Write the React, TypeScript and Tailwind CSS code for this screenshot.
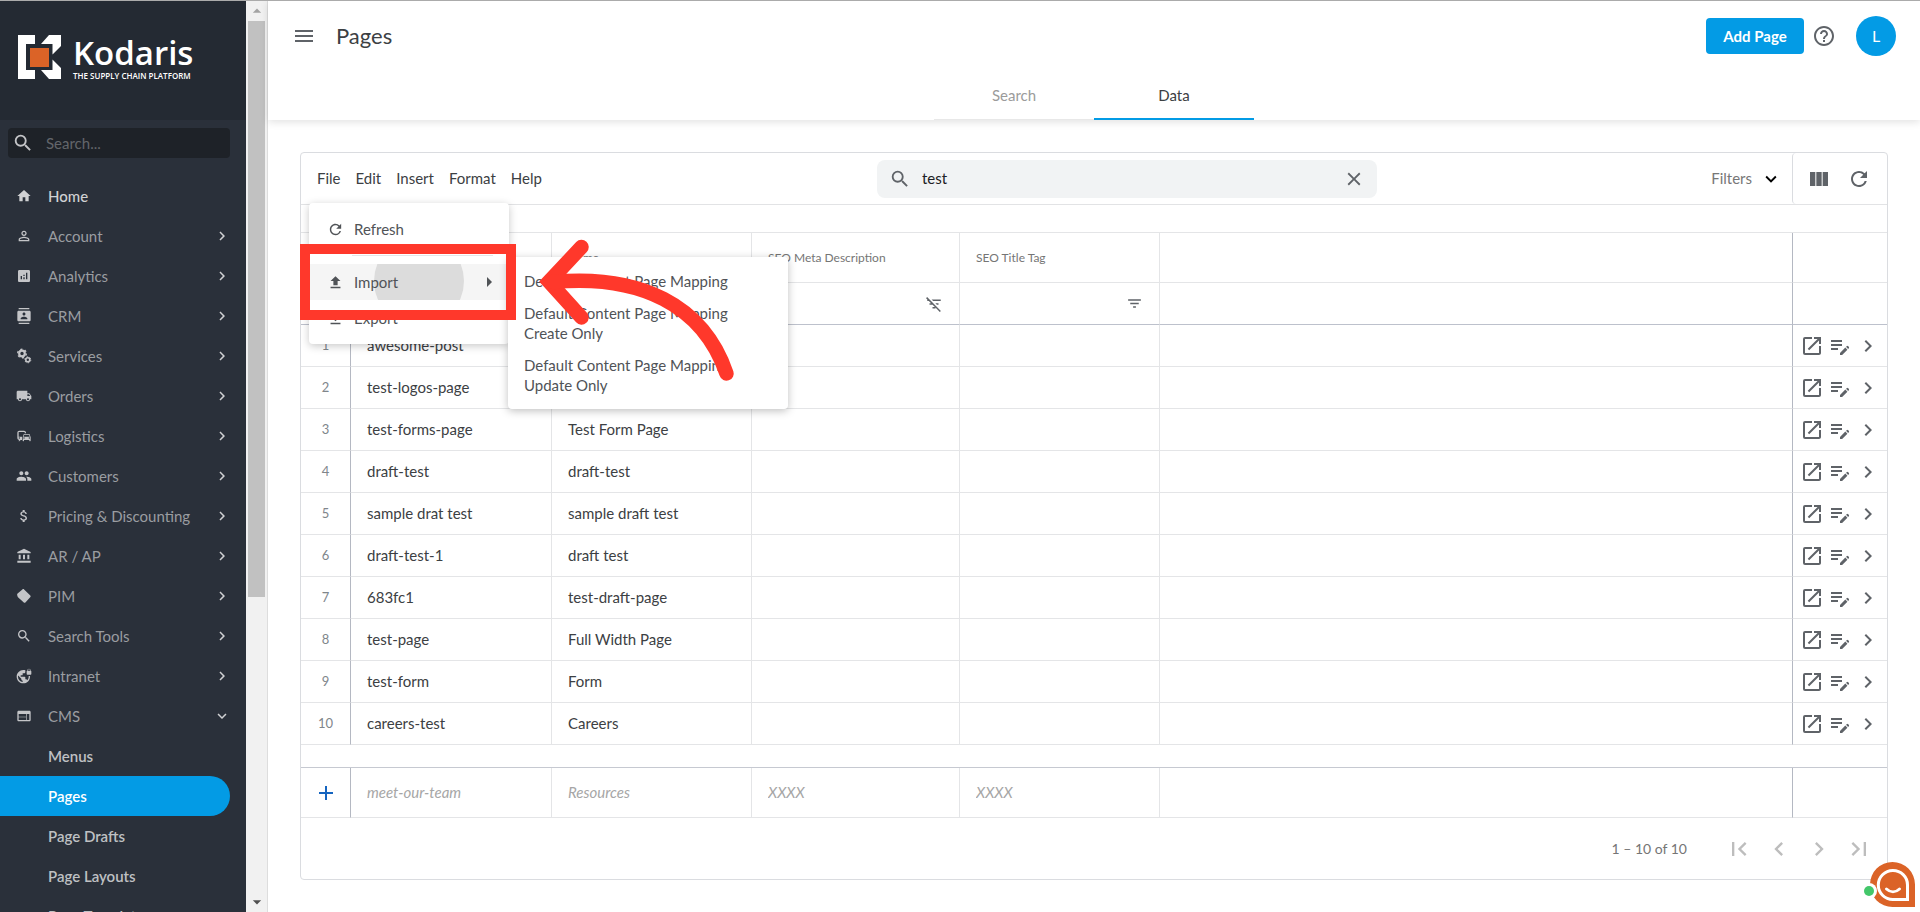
import React from "react";
import {
  MdAccountBalance,
  MdAdd,
  MdAnalytics,
  MdArrowDropUp,
  MdArrowDropDown,
  MdArrowRight,
  MdAttachMoney,
  MdChevronLeft,
  MdChevronRight,
  MdClose,
  MdContacts,
  MdDownload,
  MdEditNote,
  MdExpandMore,
  MdFilterList,
  MdFilterListOff,
  MdFirstPage,
  MdGroup,
  MdHelpOutline,
  MdHome,
  MdLastPage,
  MdLocalShipping,
  MdMenu,
  MdOpenInNew,
  MdOutlineCommute,
  MdPersonOutline,
  MdRefresh,
  MdSearch,
  MdUpload,
  MdViewColumn,
  MdVpnLock,
  MdWeb,
} from "react-icons/md";

const TagIcon = () => (
  <svg viewBox="0 0 16 16" className="size-4" fill="currentColor">
    <path d="M1.6 5.4 6.4 1.4c.5-.4 1.200-.4 1.700 0l6.200 6c.5.5.5 1.100.1 1.600l-5 5.400c-.5.5-1.200.5-1.600 0L2 9.200c-.3-.3-.5-.7-.6-1.100l-.3-1.700c0-.4.2-.7.5-1z" />
  </svg>
);

const GearsIcon = () => (
  <svg viewBox="0 0 16 16" className="size-4" fill="none" stroke="currentColor">
    <circle cx="6" cy="5.500" r="2.800" strokeWidth="2.200" />
    <circle cx="6" cy="5.500" r="4.300" strokeWidth="1.400" strokeDasharray="2.100 2.400" />
    <circle cx="11.800" cy="11.800" r="2" strokeWidth="1.600" />
    <circle cx="11.800" cy="11.800" r="3" strokeWidth="1" strokeDasharray="1.600 1.540" />
  </svg>
);

const navItems = [
  { label: "Account", icon: <MdPersonOutline size={16} /> },
  { label: "Analytics", icon: <MdAnalytics size={16} /> },
  { label: "CRM", icon: <MdContacts size={16} /> },
  { label: "Services", icon: <GearsIcon /> },
  { label: "Orders", icon: <MdLocalShipping size={16} /> },
  { label: "Logistics", icon: <MdOutlineCommute size={16} /> },
  { label: "Customers", icon: <MdGroup size={16} /> },
  { label: "Pricing & Discounting", icon: <MdAttachMoney size={16} /> },
  { label: "AR / AP", icon: <MdAccountBalance size={16} /> },
  { label: "PIM", icon: <TagIcon /> },
  { label: "Search Tools", icon: <MdSearch size={16} /> },
  { label: "Intranet", icon: <MdVpnLock size={16} /> },
];

const cmsItems = ["Menus", "Pages", "Page Drafts", "Page Layouts", "Page Templates"];

const rows = [
  ["awesome-post", ""],
  ["test-logos-page", ""],
  ["test-forms-page", "Test Form Page"],
  ["draft-test", "draft-test"],
  ["sample drat test", "sample draft test"],
  ["draft-test-1", "draft test"],
  ["683fc1", "test-draft-page"],
  ["test-page", "Full Width Page"],
  ["test-form", "Form"],
  ["careers-test", "Careers"],
];

function Logo() {
  return (
    <div className="flex h-[119px] items-start gap-3 bg-[#242a33] pt-[33px] pl-[18px] text-white">
      <svg viewBox="0 0 43 44" className="mt-px h-11 w-[43px] shrink-0">
        <path fill="#fff" d="M0 0h17v9H8v26h9v9H0z" />
        <path fill="#fff" d="M31 0h12v11l-8.500 8.500V9H23z" />
        <path fill="#fff" d="M34.500 24.500 43 33v11H31l-8-9h11.500z" />
        <path fill="#db6327" d="M12 13h19v19H12z" />
      </svg>
      <div className="font-['Open_Sans',sans-serif] font-semibold">
        <div className="text-[33px] leading-[38px]">Kodaris</div>
        <div className="text-[8px] leading-[8px] whitespace-nowrap">THE SUPPLY CHAIN PLATFORM</div>
      </div>
    </div>
  );
}

function Sidebar() {
  return (
    <aside className="w-[246px] shrink-0 overflow-hidden bg-[#2a303a]">
      <Logo />
      <div className="pt-2 pr-4 pl-2">
        <label className="flex h-[30px] items-center gap-3 rounded bg-[#1e2228] pl-1 text-[#c4c5c8]">
          <MdSearch size={22} className="shrink-0" />
          <input
            aria-label="Search menu"
            placeholder="Search..."
            className="w-full bg-transparent text-[15px] outline-none placeholder:text-[#63666b]"
          />
        </label>
      </div>
      <nav className="mt-[18px] text-[15px]">
        <a href="#home" className="flex h-10 items-center gap-4 pl-4 font-medium text-[#d0d1d3]">
          <MdHome size={16} />
          Home
        </a>
        {navItems.map((item) => (
          <a key={item.label} href="#section" className="flex h-10 items-center pr-[15px] pl-4 text-[#9a9da1]">
            <span className="flex w-4 justify-center text-[#c4c5c8]">{item.icon}</span>
            <span className="ml-4 flex-1">{item.label}</span>
            <MdChevronRight size={18} className="text-[#d0d1d3]" />
          </a>
        ))}
        <a href="#cms" className="flex h-10 items-center pr-[15px] pl-4 text-[#9a9da1]">
          <MdWeb size={16} className="text-[#c4c5c8]" />
          <span className="ml-4 flex-1">CMS</span>
          <MdExpandMore size={18} className="text-[#d0d1d3]" />
        </a>
        {cmsItems.map((label) => (
          <a
            key={label}
            href="#cms-page"
            className={
              label === "Pages"
                ? "mr-4 flex h-10 items-center rounded-r-full bg-[#039be5] pl-12 font-semibold text-white"
                : "mr-4 flex h-10 items-center pl-12 font-semibold text-[#bfc0c3]"
            }
          >
            {label}
          </a>
        ))}
      </nav>
    </aside>
  );
}

function Scrollbar() {
  return (
    <div className="flex w-[22px] shrink-0 flex-col items-center border-r border-[#dddddd] bg-[#f1f1f1] text-[#505050]">
      <MdArrowDropUp size={20} className="shrink-0 text-[#a3a3a3]" />
      <div className="h-[576px] w-[17px] shrink-0 bg-[#c1c1c1]" />
      <MdArrowDropDown size={20} className="mt-auto shrink-0" />
    </div>
  );
}

function Header() {
  return (
    <header className="relative flex h-[119px] flex-col justify-between bg-white shadow-[0_2px_8px_rgba(0,0,0,0.12)]">
      <div className="flex items-center pt-[15px] pr-6 pl-6">
        <button aria-label="Toggle menu" className="text-[#5f6368]">
          <MdMenu size={24} />
        </button>
        <h1 className="ml-5 flex-1 text-[22px] leading-7 text-[#3c4043]">Pages</h1>
        <button className="h-9 w-[98px] rounded bg-[#039be5] text-[15px] font-bold text-white">Add Page</button>
        <button aria-label="Help" className="ml-2 text-[#5f6368]">
          <MdHelpOutline size={24} />
        </button>
        <button className="ml-5 size-10 rounded-full bg-[#039be5] text-base text-white">L</button>
      </div>
      <div className="flex justify-center text-[15px]">
        <button className="h-12 w-40 border-b border-[#e8e8e8] text-[#9b9b9b]">Search</button>
        <button className="h-12 w-40 border-b-2 border-[#039be5] text-[#3c4043]">Data</button>
      </div>
    </header>
  );
}

function Toolbar() {
  return (
    <div className="flex h-[52px] items-stretch border-b border-[#e2e3e5] text-[15px]">
      <div className="flex flex-1 items-center gap-[15px] pl-4 text-[#3c4043]">
        <button>File</button>
        <button>Edit</button>
        <button>Insert</button>
        <button>Format</button>
        <button>Help</button>
      </div>
      <div className="flex h-[38px] w-[500px] items-center self-center rounded-lg bg-[#f1f3f4] px-3 text-[#5f6368]">
        <MdSearch size={22} className="shrink-0" />
        <input
          aria-label="Search pages"
          defaultValue="test"
          className="min-w-0 flex-1 bg-transparent pl-[11px] text-[#202124] outline-none"
        />
        <button aria-label="Clear search">
          <MdClose size={22} />
        </button>
      </div>
      <div className="flex w-[510px] items-stretch justify-end">
        <button className="flex items-center gap-2 pr-2.5 text-[#777777]">
          Filters
          <MdExpandMore size={22} className="text-black" />
        </button>
        <div className="flex w-[95px] items-center gap-4 rounded-l border-l border-[#dadce0] pl-3.5 text-[#5f6368]">
          <button aria-label="Columns">
            <MdViewColumn size={24} />
          </button>
          <button aria-label="Reload">
            <MdRefresh size={24} />
          </button>
        </div>
      </div>
    </div>
  );
}

const cell = "border-r border-b border-[#e4e5e7] px-4";
const headCell = "border-r border-b border-[#e4e5e7] px-4 text-left font-normal";
const filterCell = "border-r border-b border-r-[#e4e5e7] border-b-[#bdc1cc] px-4";
const wideCell = "border-b border-[#e4e5e7]";
const numCell = "border-r border-b border-r-[#b4b8c2] border-b-[#e4e5e7]";
const pinCell = "border-b border-l border-b-[#e4e5e7] border-l-[#b4b8c2]";

function DataTable() {
  return (
    <table className="w-full table-fixed border-separate border-spacing-0 text-[15px] text-[#3c4043]">
      <colgroup>
        <col className="w-[50px]" />
        <col className="w-[201px]" />
        <col className="w-[200px]" />
        <col className="w-[208px]" />
        <col className="w-[200px]" />
        <col />
        <col className="w-[95px]" />
      </colgroup>
      <thead className="text-xs text-[#757575]">
        <tr>
          <td colSpan={7} className="h-7 border-b border-[#e4e5e7]" />
        </tr>
        <tr className="h-[50px]">
          <th className={numCell} />
          <th className={headCell} />
          <th className={headCell}>Name</th>
          <th className={headCell}>SEO Meta Description</th>
          <th className={headCell}>SEO Title Tag</th>
          <th className={wideCell} />
          <th className={pinCell} />
        </tr>
        <tr className="h-[42px] text-[#5f6368]">
          <td className="border-r border-b border-r-[#b4b8c2] border-b-[#bdc1cc]" />
          <td className={filterCell} />
          <td className={filterCell} />
          <td className={filterCell}>
            <button aria-label="Clear filter" className="float-right">
              <MdFilterListOff size={18} />
            </button>
          </td>
          <td className={filterCell}>
            <button aria-label="Filter" className="float-right">
              <MdFilterList size={17} />
            </button>
          </td>
          <td className="border-b border-[#bdc1cc]" />
          <td className="border-b border-l border-b-[#bdc1cc] border-l-[#b4b8c2]" />
        </tr>
      </thead>
      <tbody>
        {rows.map(([code, name], i) => (
          <tr key={code} className="h-[42px]">
            <td className={numCell + " text-center text-[13px] text-[#80868b]"}>{i + 1}</td>
            <td className={cell}>{code}</td>
            <td className={cell}>{name}</td>
            <td className={cell} />
            <td className={cell} />
            <td className={wideCell} />
            <td className={pinCell}>
              <div className="flex gap-1 pl-[7px] text-[#5f6368]">
                <button aria-label="Open page">
                  <MdOpenInNew size={24} />
                </button>
                <button aria-label="Edit page">
                  <MdEditNote size={24} />
                </button>
                <button aria-label="View details">
                  <MdChevronRight size={24} />
                </button>
              </div>
            </td>
          </tr>
        ))}
        <tr>
          <td colSpan={7} className="h-[23px] border-b border-[#c6c9d1]" />
        </tr>
        <tr className="h-[50px]">
          <td className={numCell}>
            <button aria-label="Add row" className="mx-auto block text-[#1565c0]">
              <MdAdd size={24} />
            </button>
          </td>
          {["meet-our-team", "Resources", "XXXX", "XXXX"].map((hint, i) => (
            <td key={i} className={cell}>
              <input
                aria-label={"New row, column " + (i + 1)}
                placeholder={hint}
                className="w-full italic outline-none placeholder:text-[#a6a6a6]"
              />
            </td>
          ))}
          <td className={wideCell} />
          <td className={pinCell} />
        </tr>
      </tbody>
    </table>
  );
}

function FileMenu() {
  return (
    <div className="absolute top-[50px] left-2 w-[200px] rounded bg-white py-2 text-[15px] text-[#505357] shadow-[0_2px_8px_rgba(0,0,0,0.22)]">
      <button className="flex h-9 w-full items-center gap-2.5 pl-[18px]">
        <MdRefresh size={17} />
        Refresh
      </button>
      <div className="my-2 mr-4 ml-[43px] h-px bg-[#e4e5e7]" />
      <button className="relative flex h-9 w-full items-center gap-2.5 overflow-hidden bg-[#f5f5f5] pl-[18px]">
        {/* ripple */}
        <span className="absolute -top-7 left-[65px] size-[90px] rounded-full bg-[#dcdcdc]" />
        <MdUpload size={17} className="relative" />
        <span className="relative">Import</span>
        <MdArrowRight size={24} className="absolute right-2" />
      </button>
      <button className="flex h-9 w-full items-center gap-2.5 pl-[18px]">
        <MdDownload size={17} />
        Export
      </button>
    </div>
  );
}

function ImportSubmenu() {
  return (
    <div className="absolute top-[104px] left-[207px] w-[280px] rounded bg-white py-2 text-[15px] leading-5 text-[#505357] shadow-[0_2px_8px_rgba(0,0,0,0.25)]">
      <button className="block w-full px-4 py-1.5 text-left">Default Content Page Mapping</button>
      <button className="block w-full px-4 py-1.5 text-left">
        Default Content Page Mapping
        <br />
        Create Only
      </button>
      <button className="block w-full px-4 py-1.5 text-left">
        Default Content Page Mapping
        <br />
        Update Only
      </button>
    </div>
  );
}

function Highlight() {
  return (
    <>
      <div className="pointer-events-none absolute top-[91px] -left-px h-[76px] w-[216px] border-[10px] border-[#ff382b]" />
      <svg
        viewBox="534 234 210 156"
        className="pointer-events-none absolute top-[81px] left-[233px] h-[156px] w-[210px]"
        fill="none"
        stroke="#ff382b"
        strokeWidth="14.5"
        strokeLinecap="round"
        strokeLinejoin="miter"
      >
        <path d="M581.500 247 549 281.700 581.500 317.500" />
        <path d="M553 282C640 274 703 305 726.500 373.500" />
      </svg>
    </>
  );
}

function ChatBubble() {
  return (
    <button aria-label="Chat" className="absolute right-[5px] bottom-[5px] h-[45px] w-[54px]">
      <svg viewBox="0 0 54 45" className="h-full w-full">
        <path fill="#db6327" d="M31.500 0A22.500 22.500 0 0 1 54 22.500V45H31.500a22.500 22.500 0 0 1 0-45z" />
        <path
          fill="none"
          stroke="#fff"
          strokeWidth="3"
          d="M31.800 8.500A14.500 14.500 0 0 1 46.500 23v14.500H31.800a14.500 14.500 0 0 1 0-29z"
        />
        <path fill="none" stroke="#fff" strokeWidth="3" strokeLinecap="round" d="M25.500 27c4 3.700 9 3.700 13 0" />
        <circle cx="8" cy="29" r="8" fill="#fff" />
        <circle cx="8" cy="29" r="5" fill="#43c76a" />
      </svg>
    </button>
  );
}

export default function App() {
  return (
    <div className="relative flex h-screen overflow-hidden border-t border-[#ababab] bg-white font-['Lato','Open_Sans',sans-serif]">
      <Sidebar />
      <Scrollbar />
      <main className="min-w-0 flex-1">
        <Header />
        <div className="px-8 pt-8">
          <section className="relative rounded border border-[#dadce0]">
            <Toolbar />
            <DataTable />
            <div className="flex h-[61px] items-center justify-end gap-3 pr-3.5 text-sm text-[#757575]">
              <span className="mr-[26px]">1 – 10 of 10</span>
              <button aria-label="First page" className="text-[#bdbdbd]">
                <MdFirstPage size={28} />
              </button>
              <button aria-label="Previous page" className="text-[#bdbdbd]">
                <MdChevronLeft size={28} />
              </button>
              <button aria-label="Next page" className="text-[#bdbdbd]">
                <MdChevronRight size={28} />
              </button>
              <button aria-label="Last page" className="text-[#bdbdbd]">
                <MdLastPage size={28} />
              </button>
            </div>
            <FileMenu />
            <ImportSubmenu />
            <Highlight />
          </section>
        </div>
      </main>
      <ChatBubble />
    </div>
  );
}
